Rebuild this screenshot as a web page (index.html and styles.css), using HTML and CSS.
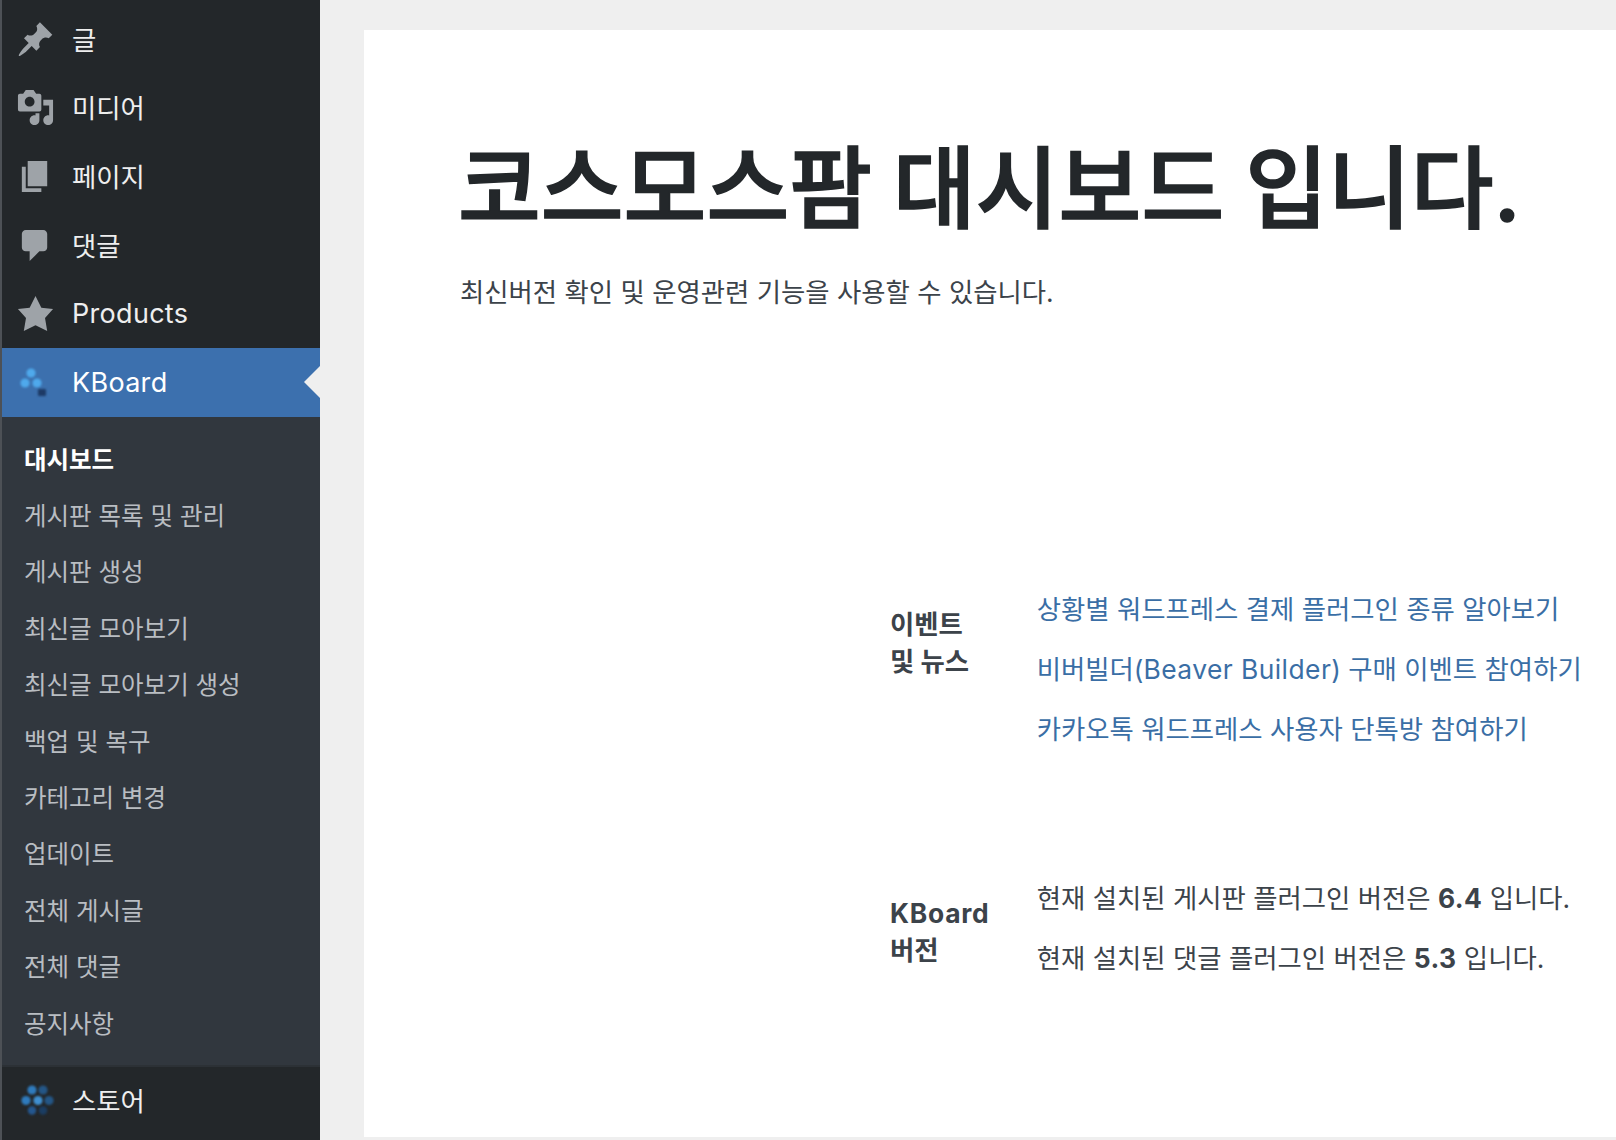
FILE: index.html
```html
<!DOCTYPE html>
<html lang="ko">
<head>
<meta charset="utf-8">
<title>코스모스팜 대시보드</title>
<link rel="stylesheet" href="styles.css">
</head>
<body>
<div class="layout">
  <aside class="sidebar">
    <ul class="menu menu-top">
      <li class="menu-item"><svg class="icon" viewBox="0 0 20 20"><path d="M10.44 3.02l1.82-1.82 6.36 6.35-1.83 1.82c-1.05-.68-2.48-.57-3.41.36l-.75.75c-.92.93-1.04 2.35-.35 3.41l-1.83 1.82-2.41-2.41-2.8 2.79c-.42.42-3.38 2.71-3.8 2.29s1.86-3.39 2.28-3.81l2.79-2.79L4.1 9.36l1.83-1.82c1.05.69 2.48.57 3.4-.36l.75-.75c.93-.92 1.05-2.35.36-3.41z"/></svg><span class="ko">글</span></li>
      <li class="menu-item"><svg class="icon" viewBox="0 0 20 20"><path fill-rule="evenodd" d="M13 11V4c0-.55-.45-1-1-1h-1.67L9 1H5L3.67 3H2c-.55 0-1 .45-1 1v7c0 .55.45 1 1 1h10c.55 0 1-.45 1-1zM7 4.5c1.38 0 2.5 1.12 2.5 2.5S8.38 9.5 7 9.5 4.5 8.38 4.5 7 5.62 4.5 7 4.5zM14 6h5v10.5c0 1.38-1.12 2.5-2.5 2.5S14 17.88 14 16.5s1.12-2.5 2.5-2.5c.17 0 .34.02.5.05V9h-3V6zm-4 8.05V13h2v3.5c0 1.38-1.12 2.5-2.5 2.5S7 17.88 7 16.5 8.12 14 9.5 14c.17 0 .34.02.5.05z"/></svg><span class="ko">미디어</span></li>
      <li class="menu-item"><svg class="icon" viewBox="0 0 20 20"><path d="M6 15V2h10v13H6zm-1 1h8v2H3V5h2v11z"/></svg><span class="ko">페이지</span></li>
      <li class="menu-item"><svg class="icon" viewBox="0 0 20 20"><path d="M5 2h9c1.1 0 2 .9 2 2v7c0 1.1-.9 2-2 2h-2l-5 5v-5H5c-1.1 0-2-.9-2-2V4c0-1.1.9-2 2-2z"/></svg><span class="ko">댓글</span></li>
      <li class="menu-item"><svg class="icon" viewBox="0 0 20 20"><path d="M10 1l3 6 6 .75-4.12 4.62L16 19l-6-3-6 3 1.13-6.63L1 7.75 7 7z"/></svg><span class="latin">Products</span></li>
      <li class="menu-item is-current"><svg class="icon logo" viewBox="0 0 39 39"><g transform="translate(-16 -363)"><circle class="dot-light" cx="31" cy="373" r="4.6"/><circle class="dot-light" cx="25" cy="383" r="4.6"/><circle class="dot-light" cx="37" cy="383" r="4.6"/><rect class="dot-dark" x="38" y="389" width="8" height="7" rx="1"/></g></svg><span class="latin">KBoard</span></li>
    </ul>
    <ul class="submenu">
      <li class="submenu-item is-active">대시보드</li>
      <li class="submenu-item">게시판 목록 및 관리</li>
      <li class="submenu-item">게시판 생성</li>
      <li class="submenu-item">최신글 모아보기</li>
      <li class="submenu-item">최신글 모아보기 생성</li>
      <li class="submenu-item">백업 및 복구</li>
      <li class="submenu-item">카테고리 변경</li>
      <li class="submenu-item">업데이트</li>
      <li class="submenu-item">전체 게시글</li>
      <li class="submenu-item">전체 댓글</li>
      <li class="submenu-item">공지사항</li>
    </ul>
    <ul class="menu">
      <li class="menu-item menu-store"><svg class="icon logo logo-store" viewBox="0 0 39 39"><g><circle class="store-a" cx="16" cy="9" r="4.6"/><circle class="store-b" cx="27" cy="9" r="4.6"/><circle class="store-a" cx="10" cy="19.5" r="4.6"/><circle class="store-c" cx="22" cy="19.5" r="4.6"/><circle class="store-b" cx="33" cy="19.5" r="4.6"/><circle class="store-d" cx="16" cy="29.5" r="4.2"/><circle class="store-e" cx="27" cy="29.5" r="4.2"/></g></svg><span class="ko">스토어</span></li>
    </ul>
  </aside>
  <main class="content">
    <section class="panel">
      <h1 class="title">코스모스팜 대시보드 입니다.</h1>
      <p class="lead">최신버전 확인 및 운영관련 기능을 사용할 수 있습니다.</p>
      <div class="info-group info-news">
        <h2 class="info-label">이벤트<br>및 뉴스</h2>
        <ul class="info-list">
          <li><a href="#">상황별 워드프레스 결제 플러그인 종류 알아보기</a></li>
          <li><a href="#">비버빌더(<span class="latin-inline">Beaver Builder</span>) 구매 이벤트 참여하기</a></li>
          <li><a href="#">카카오톡 워드프레스 사용자 단톡방 참여하기</a></li>
        </ul>
      </div>
      <div class="info-group info-version">
        <h2 class="info-label"><span class="latin-inline">KBoard</span><br>버전</h2>
        <ul class="info-list">
          <li>현재 설치된 게시판 플러그인 버전은 <strong>6.4</strong> 입니다.</li>
          <li>현재 설치된 댓글 플러그인 버전은 <strong>5.3</strong> 입니다.</li>
        </ul>
      </div>
    </section>
  </main>
</div>
</body>
</html>
```

FILE: styles.css
```css
* { box-sizing: border-box; }
html, body { margin: 0; height: 1140px; overflow: hidden; }
body {
  background: #efefef;
  font-family: Inter, "Noto Sans CJK KR", "Noto Sans", sans-serif;
  color: #23272a;
}
ul { list-style: none; margin: 0; padding: 0; }
.layout { display: flex; height: 1140px; }

.sidebar {
  width: 320px;
  flex: none;
  background: #23272a;
  border-left: 2px solid #4d5156;
  padding-top: 5px;
  overflow: hidden;
}
.menu-item {
  height: 68.6px;
  display: flex;
  align-items: center;
  gap: 17px;
  padding-left: 14px;
  font-size: 26.4px;
  color: #eeeeee;
  position: relative;
}
.ko { margin-bottom: 2px; }
.latin { font-size: 27px; letter-spacing: 0.3px; }
.menu-store { height: 66px; }
.icon { width: 39px; height: 39px; flex: none; fill: #9ea3a8; }
.is-current { background: #3c70ae; color: #fff; }
.is-current::after {
  content: "";
  position: absolute;
  right: 0;
  top: 18.3px;
  border: 16px solid transparent;
  border-left-width: 0;
  border-right-color: #efefef;
}
.logo circle, .logo rect { filter: blur(0.8px); }
.logo-store circle { filter: blur(1.2px); }
.dot-light { fill: #4fa9ec; }
.dot-dark { fill: #1d3a66; }
.store-a { fill: #2f7bbd; }
.store-b { fill: #245686; }
.store-c { fill: #3f8fd0; }
.store-d { fill: #24578f; }
.store-e { fill: #1b3d62; }

.submenu {
  background: #31373e;
  padding: 13.4px 0 15px;
  border-bottom: 2px solid #2c3136;
}
.submenu-item {
  height: 56.4px;
  display: flex;
  align-items: center;
  padding-left: 22px;
  font-size: 24.5px;
  color: #b9bdc2;
}
.is-active { color: #fff; font-weight: 700; }

.content { flex: 1; padding: 30px 0 3px 44px; min-width: 0; }
.panel { background: #fff; height: 100%; padding: 94px 0 0 96px; }
.title {
  margin: 0 0 0 -2px;
  font-size: 90px;
  line-height: 130px;
  font-weight: 500;
  -webkit-text-stroke: 1.6px #23272a;
  word-spacing: -3px;
  color: #23272a;
  white-space: nowrap;
}
.lead {
  margin: 20px 0 0;
  font-size: 26.4px;
  line-height: 36px;
  color: #3c434a;
}
.info-group {
  display: flex;
  margin-left: 430px;
  font-size: 26.4px;
  white-space: nowrap;
}
.latin-inline { letter-spacing: 0.45px; }
.info-news { margin-top: 269px; }
.info-version { margin-top: 109px; }
.info-label {
  width: 146.7px;
  flex: none;
  margin: 0;
  padding-top: 27px;
  font-size: 26.4px;
  line-height: 37px;
  font-weight: 700;
  color: #3c434a;
}
.info-label .latin-inline { letter-spacing: 0.75px; }
.info-list li { height: 60px; line-height: 60px; color: #3c434a; }
.info-list a { color: #3a6ea5; text-decoration: none; }
.info-list strong { font-weight: 700; letter-spacing: 0.4px; }
```
